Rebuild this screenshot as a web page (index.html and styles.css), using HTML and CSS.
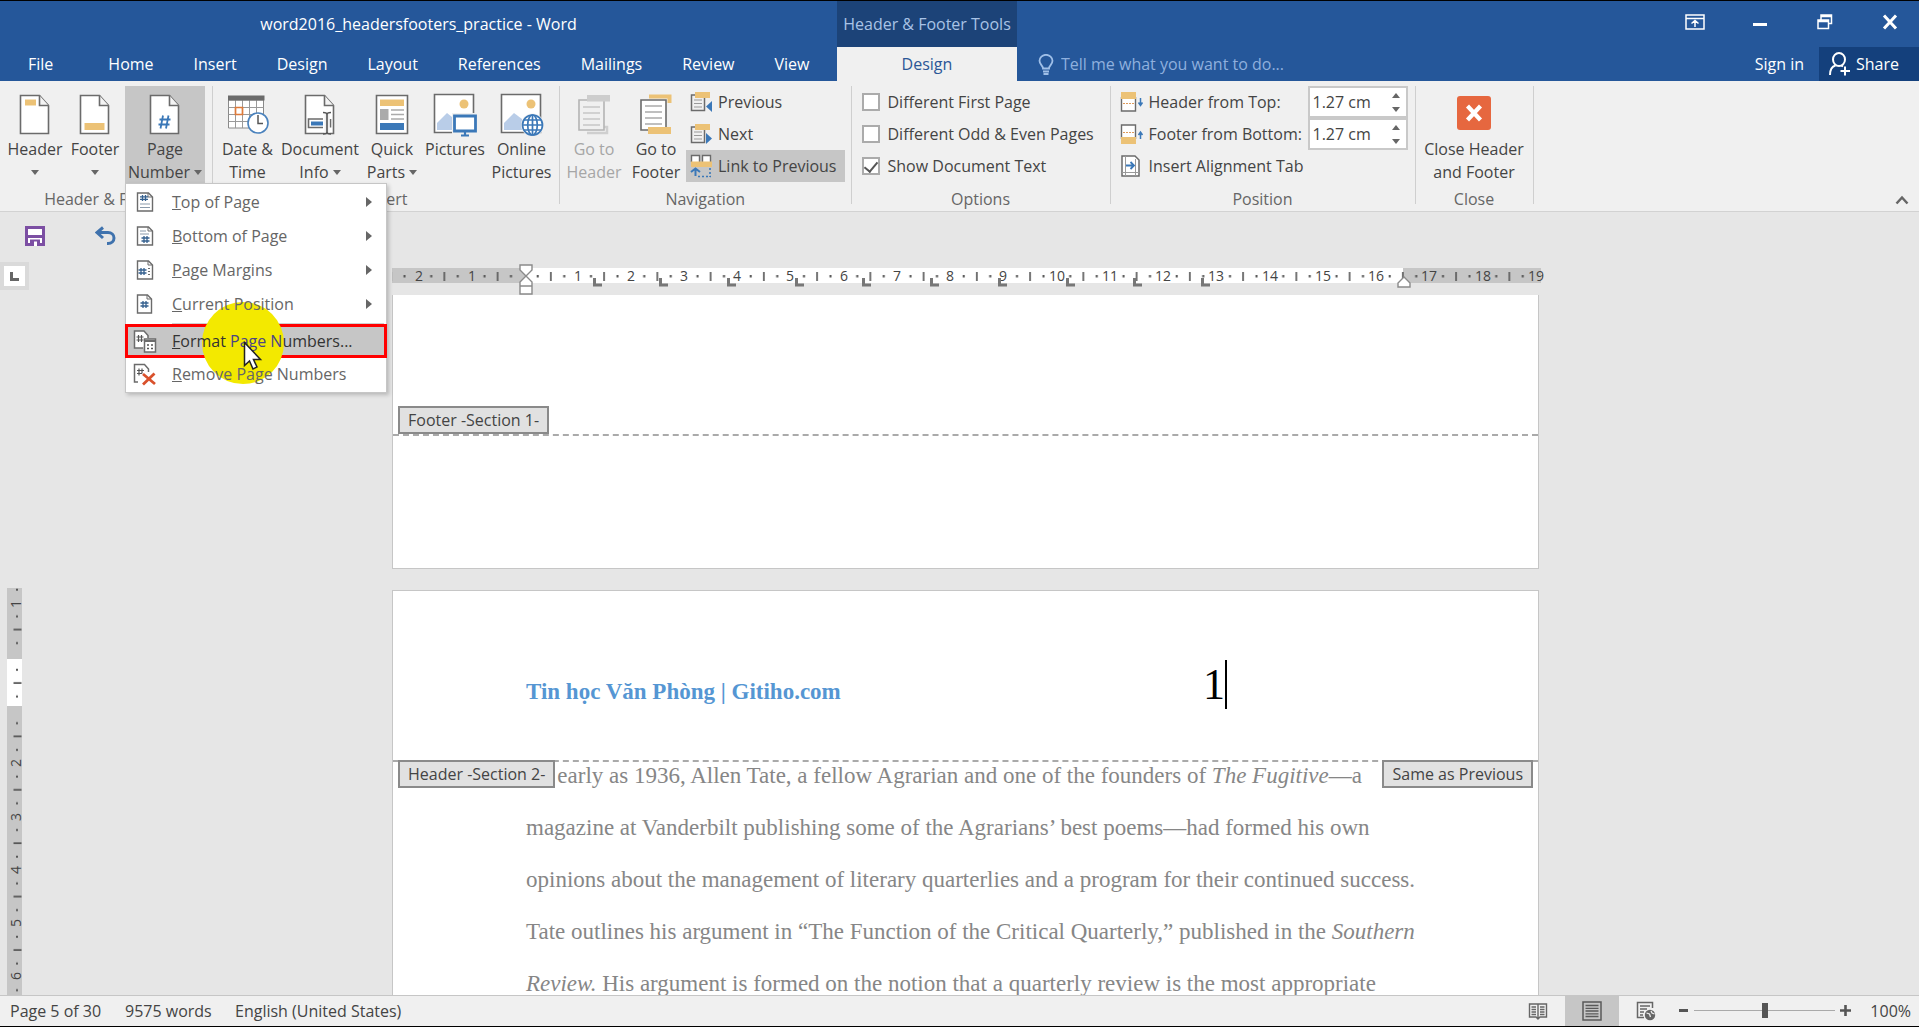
FILE: index.html
```
<!DOCTYPE html>
<html lang="en">
<head>
  <meta charset="UTF-8">
  <meta name="viewport" content="width=device-width, initial-scale=1.0">
  <title>word2016_headersfooters_practice - Word</title>
  <link rel="stylesheet" href="styles.css">
</head>
<body>
  <!-- Title bar and tabs -->
  <header class="topbar">
    <div class="topbar-main">
      <h1 class="doc-title">word2016_headersfooters_practice - Word</h1>
      <nav class="tabs">
        <button class="tab tab-file">File</button>
        <button class="tab">Home</button>
        <button class="tab">Insert</button>
        <button class="tab">Design</button>
        <button class="tab">Layout</button>
        <button class="tab">References</button>
        <button class="tab">Mailings</button>
        <button class="tab">Review</button>
        <button class="tab">View</button>
      </nav>
    </div>
    <div class="context">
      <div class="context-title">Header &amp; Footer Tools</div>
      <button class="context-tab">Design</button>
    </div>
    <div class="topbar-side">
      <div class="window-buttons">
        <button class="win" aria-label="Ribbon display options">
          <svg width="20" height="16" viewBox="0 0 20 16" fill="none" stroke="#fff" stroke-width="1.5"><path d="M1 1h18v14H1zM1 4.500h18M10 13V6.500M6.500 9.500 10 6.500l3.500 3"/></svg>
        </button>
        <button class="win" aria-label="Minimize">
          <svg width="20" height="16" viewBox="0 0 20 16"><path d="M3 9h14v3H3z" fill="#fff"/></svg>
        </button>
        <button class="win" aria-label="Restore">
          <svg width="20" height="16" viewBox="0 0 20 16" fill="none" stroke="#fff" stroke-width="1.500"><path d="M3 6h10.500v8.500H3zM3 7.500h10.500M6 5.500V1h10.500v8.500H14M6 2.500h10.500"/></svg>
        </button>
        <button class="win" aria-label="Close">
          <svg width="20" height="16" viewBox="0 0 20 16" fill="none" stroke="#fff" stroke-width="3"><path d="M4 1.500l12 13M16 1.500l-12 13"/></svg>
        </button>
      </div>
      <div class="account">
        <label class="tellme">
          <svg width="16" height="21" viewBox="0 0 16 21" fill="none" stroke="#9fbfe8" stroke-width="1.800"><path d="M5 14.500C5 11.500 1.500 10.500 1.500 6.800a6.300 5.800 0 0 1 13 0C14.500 10.500 11 11.500 11 14.500z"/><path d="M5 17.500h6M5.500 20h5"/></svg>
          <input type="text" placeholder="Tell me what you want to do..." aria-label="Tell me what you want to do">
        </label>
        <button class="signin">Sign in</button>
        <button class="share">
          <svg width="21" height="24" viewBox="0 0 21 24" fill="none" stroke="#fff" stroke-width="2"><ellipse cx="10" cy="7.500" rx="6" ry="6.500"/><path d="M1 23c0-5 2-8.500 5.500-9.500M12.500 13.500l1.500 1M16 14.500v9M11.500 19H21"/></svg>
          Share
        </button>
      </div>
    </div>
  </header>

  <!-- Ribbon -->
  <section class="ribbon">
    <div class="group">
      <div class="group-body group-hf">
        <button class="big big-header">
          <svg width="32" height="42" viewBox="0 0 32 42"><path d="M1.500 1.500h19l9 10v28h-28z" fill="#fff" stroke="#6b6b6b" stroke-width="1.600"/><path d="M20.500 1.500v10h9" fill="#f4f4f4" stroke="#6b6b6b" stroke-width="1.600"/><path d="M6 5.500h11v6H6z" fill="#ecc276"/></svg>
          <span>Header</span><span class="caret"></span>
        </button>
        <button class="big big-footer">
          <svg width="32" height="42" viewBox="0 0 32 42"><path d="M1.500 1.500h19l9 10v28h-28z" fill="#fff" stroke="#6b6b6b" stroke-width="1.600"/><path d="M20.500 1.500v10h9" fill="#f4f4f4" stroke="#6b6b6b" stroke-width="1.600"/><path d="M5.500 29h20v7h-20z" fill="#ecc276"/></svg>
          <span>Footer</span><span class="caret"></span>
        </button>
        <div class="menu-anchor">
          <button class="big big-number pressed">
            <svg width="32" height="42" viewBox="0 0 32 42"><path d="M1.500 1.500h19l9 10v28h-28z" fill="#fff" stroke="#6b6b6b" stroke-width="1.600"/><path d="M20.500 1.500v10h9" fill="#f4f4f4" stroke="#6b6b6b" stroke-width="1.600"/><path d="M14 21.500l-2.500 13M19.500 21.500l-2.500 13M10.500 25.500h11M9.500 30.500h11" stroke="#3b78b8" stroke-width="1.800"/></svg>
            <span>Page</span><span>Number<i class="caret"></i></span>
          </button>
          <!-- Page Number menu -->
          <div class="menu" role="menu">
            <i class="halo"></i>
            <button class="item">
              <svg width="24" height="20" viewBox="0 0 24 20"><path d="M4.500 1h11l4 4v14h-15z" fill="#fff" stroke="#6b6b6b" stroke-width="1.400"/><path d="M15 1v4h4" fill="none" stroke="#6b6b6b"/><path d="M9.500 3v6M12.500 3v6M7 4.800h8M7 7.400h8" stroke="#34608f" stroke-width="1.300"/><path d="M7 12h10M7 15.500h10" stroke="#8a9aab"/></svg>
              <span class="text"><u>T</u>op of Page</span><i class="arrow"></i>
            </button>
            <button class="item">
              <svg width="24" height="20" viewBox="0 0 24 20"><path d="M4.500 1h11l4 4v14h-15z" fill="#fff" stroke="#6b6b6b" stroke-width="1.400"/><path d="M15 1v4h4" fill="none" stroke="#6b6b6b"/><path d="M11 10v7M14 10v7M8.500 12h8M8.500 15h8" stroke="#34608f" stroke-width="1.300"/><path d="M7 5h6M7 8h9" stroke="#8a9aab"/></svg>
              <span class="text"><u>B</u>ottom of Page</span><i class="arrow"></i>
            </button>
            <button class="item">
              <svg width="24" height="20" viewBox="0 0 24 20"><path d="M4.500 1h11l4 4v14h-15z" fill="#fff" stroke="#6b6b6b" stroke-width="1.400"/><path d="M15 1v4h4" fill="none" stroke="#6b6b6b"/><path d="M8 8v7M11 8v7M5.500 10h8M5.500 13h8" stroke="#34608f" stroke-width="1.300"/><path d="M15 8.500h2M15 11.500h2M15 14.500h2" stroke="#6b6b6b"/></svg>
              <span class="text"><u>P</u>age Margins</span><i class="arrow"></i>
            </button>
            <button class="item">
              <svg width="24" height="20" viewBox="0 0 24 20"><path d="M4.500 1h10l4 4v14h-14z" fill="#fff" stroke="#6b6b6b" stroke-width="1.400"/><path d="M14 1v4h4" fill="none" stroke="#6b6b6b"/><path d="M10 7v7M13 7v7M7.500 9h8M7.500 12h8" stroke="#34608f" stroke-width="1.300"/></svg>
              <span class="text"><u>C</u>urrent Position</span><i class="arrow"></i>
            </button>
            <hr>
            <button class="item item-active">
              <svg width="24" height="24" viewBox="0 0 24 24"><path d="M10 19H1.500V2H11l4 4.500V9" fill="#fff" stroke="#6b6b6b" stroke-width="1.500"/><path d="M5.500 6v7M8.500 6v7M3.500 8h7M3.500 11h7" stroke="#555" stroke-width="1.200"/><path d="M11.500 10h11v13h-11z" fill="#fff" stroke="#6b6b6b" stroke-width="1.500"/><path d="M11.500 12h11" stroke="#6b6b6b" stroke-width="2"/><path d="M14 16h2M18 16h2M14 19.500h2M18 19.500h2" stroke="#555" stroke-width="1.600"/></svg>
              <span class="text"><u>F</u>ormat <span class="lit">Page N</span>umbers...</span>
            </button>
            <button class="item">
              <svg width="24" height="24" viewBox="0 0 24 24"><path d="M5 20H1.500V2.500h10l4 4.500V10" fill="#fff" stroke="#6b6b6b" stroke-width="1.500"/><path d="M6 6.500v7M9 6.500v5M4 8.500h7M4 11.500h5" stroke="#555" stroke-width="1.200"/><path d="M10 12l12 10M21.500 11.500 10 22.500" stroke="#d9512c" stroke-width="2.800"/></svg>
              <span class="text"><u>R</u>emove Page Numbers</span>
            </button>
            <svg class="pointer" width="20" height="30" viewBox="0 0 20 30"><path d="M1.500 1.500v23l5-4.500 3.500 8 4-2-3.500-7.500h7z" fill="#fff" stroke="#222" stroke-width="1.500"/></svg>
          </div>
        </div>
      </div>
      <div class="group-name">Header &amp; Footer</div>
    </div>

    <div class="group">
      <div class="group-body">
        <button class="big big-date">
          <svg width="42" height="42" viewBox="0 0 42 42"><path d="M1.500 6h35v28h-35z" fill="#fff" stroke="#8a8a8a"/><path d="M1.500 13.500h35M1.500 20.500h35M1.500 27.500h35M8.500 6v28M15.500 6v28M22.500 6v28M29.500 6v28" stroke="#9a9a9a"/><path d="M1 1.500h36.500v5H1z" fill="#6b6b6b"/><path d="M8.500 13.500h7v7h-7z" fill="#fff" stroke="#dd7a3a" stroke-width="1.700"/><circle cx="31" cy="29" r="10" fill="#fff" stroke="#4a82bd" stroke-width="1.600"/><path d="M31 21v8.500h5" fill="none" stroke="#555" stroke-width="1.500"/></svg>
          <span>Date &amp;</span><span>Time</span>
        </button>
        <button class="big big-doc">
          <svg width="32" height="42" viewBox="0 0 32 42"><path d="M1.500 1.500h19l9 10v28h-28z" fill="#fff" stroke="#6b6b6b" stroke-width="1.600"/><path d="M20.500 1.500v10h9" fill="#f4f4f4" stroke="#6b6b6b" stroke-width="1.600"/><path d="M19 25H4.500v8.500H19M26.500 25v8.500" fill="none" stroke="#6b6b6b" stroke-width="1.600"/><path d="M7 27.500h12v4H7z" fill="#3b78b8"/><path d="M23 19.500V39" stroke="#f0f0f0" stroke-width="5"/><path d="M19 18.500c2.500 0 4 .5 4 2 0-1.500 1.500-2 4-2M19 40c2.500 0 4-.5 4-2 0 1.500 1.500 2 4 2M23 20v18.500" fill="none" stroke="#555" stroke-width="1.600"/></svg>
          <span>Document</span><span>Info<i class="caret"></i></span>
        </button>
        <button class="big big-quick">
          <svg width="34" height="42" viewBox="0 0 34 42"><path d="M1.500 1.500h31v38h-31z" fill="#fff" stroke="#6b6b6b" stroke-width="1.600"/><path d="M5 5.500h24v6.500H5z" fill="#ecc276"/><path d="M5 15h8.500v11H5z" fill="#ababab"/><path d="M16 16h13M16 20.500h13M16 25h13" stroke="#ababab" stroke-width="1.400"/><path d="M5 29h24v7H5z" fill="#3b78b8"/></svg>
          <span>Quick</span><span>Parts<i class="caret"></i></span>
        </button>
        <button class="big big-pic">
          <svg width="44" height="44" viewBox="0 0 44 44"><path d="M1.500 1.500h39v38h-39z" fill="#fff" stroke="#6b6b6b" stroke-width="1.600"/><circle cx="31" cy="11" r="4.500" fill="#ecc276"/><path d="M4 37V30L14 20l5 4v13z" fill="#b9cde8"/><path d="M19 20h25v24H19z" fill="#f0f0f0"/><path d="M21.500 23h21v15h-21z" fill="#fff" stroke="#3b78b8" stroke-width="2.800"/><path d="M32 38v4M28 42.500h8" stroke="#3b78b8" stroke-width="2.200"/></svg>
          <span>Pictures</span><span></span>
        </button>
        <button class="big big-online">
          <svg width="44" height="44" viewBox="0 0 44 44"><path d="M1.500 1.500h39v38h-39z" fill="#fff" stroke="#6b6b6b" stroke-width="1.600"/><circle cx="31" cy="11" r="4.500" fill="#ecc276"/><path d="M4 37V30L14 20l8 6v11z" fill="#b9cde8"/><circle cx="32.500" cy="32" r="11.500" fill="#f0f0f0"/><g fill="#fff" stroke="#3b78b8" stroke-width="1.700"><circle cx="32.500" cy="32" r="10"/><ellipse cx="32.500" cy="32" rx="4.800" ry="10"/><path d="M22.500 32h20M24 27h17M24 37h17M32.500 22v20" fill="none"/></g></svg>
          <span>Online</span><span>Pictures</span>
        </button>
      </div>
      <div class="group-name">Insert</div>
    </div>

    <div class="group">
      <div class="group-body">
        <button class="big big-goheader" disabled>
          <svg width="34" height="42" viewBox="0 0 34 42"><path d="M26 33h4v6H10" fill="none" stroke="#cfcfcf" stroke-width="2.500"/><path d="M2 6h25v30H2z" fill="#f0f0f0" stroke="#b4b4b4" stroke-width="1.600"/><path d="M6 13h17M6 19h17M6 25h17M6 31h17" stroke="#c6c6c6" stroke-width="1.500"/><path d="M10 1h23v6.500H10z" fill="#cdcdcd"/></svg>
          <span>Go to</span><span>Header</span>
        </button>
        <button class="big big-gofooter">
          <svg width="34" height="42" viewBox="0 0 34 42"><path d="M10 2.500h20.500V9" fill="none" stroke="#ecc276" stroke-width="4"/><path d="M2 6h25v30H2z" fill="#fff" stroke="#6b6b6b" stroke-width="1.600"/><path d="M6 12h17M6 18h17M6 24h17M6 30h17" stroke="#ababab" stroke-width="1.500"/><path d="M9 33h23v7H9z" fill="#ecc276"/></svg>
          <span>Go to</span><span>Footer</span>
        </button>
        <div class="stack stack-nav">
          <button class="small">
            <svg width="23" height="22" viewBox="0 0 23 22"><path d="M14.500 7v12.500H1.500V4H5" fill="none" stroke="#6b6b6b" stroke-width="1.500"/><path d="M4 9h8M4 12.500h8M4 16h8" stroke="#9a9a9a"/><path d="M5 1h15v6H5z" fill="#ecc276"/><path d="M22 10v11l-6-5.500z" fill="#3b78b8"/></svg>
            Previous
          </button>
          <button class="small">
            <svg width="23" height="22" viewBox="0 0 23 22"><path d="M14.500 7v12.500H1.500V4H5" fill="none" stroke="#6b6b6b" stroke-width="1.500"/><path d="M4 9h8M4 12.500h8M4 16h8" stroke="#9a9a9a"/><path d="M5 1h15v6H5z" fill="#ecc276"/><path d="M16 10v11l6-5.500z" fill="#3b78b8"/></svg>
            Next
          </button>
          <button class="small pressed">
            <svg width="23" height="24" viewBox="0 0 23 24"><path d="M1.500 8V1.500h8V8M12.500 8V1.500h8V8" fill="#fff" stroke="#6b6b6b" stroke-width="1.400"/><path d="M1 7.500h21V13H1z" fill="#ecc276"/><path d="M1 18l4.500-3.500L10 18M5.500 15v7" fill="none" stroke="#3b78b8" stroke-width="2"/><path d="M8 22.500h13M20 14v9" stroke="#3b78b8" stroke-width="1.600" stroke-dasharray="2 2"/></svg>
            Link to Previous
          </button>
        </div>
      </div>
      <div class="group-name">Navigation</div>
    </div>

    <div class="group">
      <div class="group-body">
        <div class="stack stack-options">
          <label class="check"><input type="checkbox">Different First Page</label>
          <label class="check"><input type="checkbox">Different Odd &amp; Even Pages</label>
          <label class="check"><input type="checkbox" checked>Show Document Text</label>
        </div>
      </div>
      <div class="group-name">Options</div>
    </div>

    <div class="group">
      <div class="group-body">
        <div class="stack stack-position">
          <div class="field">
            <svg width="24" height="22" viewBox="0 0 24 22"><path d="M1.500 6v14h14V6" fill="#fff" stroke="#6b6b6b" stroke-width="1.400"/><path d="M1 1h15v7H1z" fill="#ecc276"/><path d="M3 12.500h12" stroke="#dd9a5a" stroke-dasharray="2 1"/><path d="M20.500 7v7M18.500 11.500l2 3 2-3" fill="none" stroke="#3b78b8" stroke-width="1.500"/></svg>
            <label for="headerTop">Header from Top:</label>
            <span class="spin">
              <input type="text" id="headerTop" value="1.27 cm">
              <span class="spin-buttons"><button class="up" aria-label="Increase"></button><button class="down" aria-label="Decrease"></button></span>
            </span>
          </div>
          <div class="field">
            <svg width="24" height="22" viewBox="0 0 24 22"><path d="M1.500 16V2h14v14" fill="#fff" stroke="#6b6b6b" stroke-width="1.400"/><path d="M1 14h15v7H1z" fill="#ecc276"/><path d="M3 9.500h12" stroke="#dd9a5a" stroke-dasharray="2 1"/><path d="M20.500 16V9M18.500 12l2-3 2 3" fill="none" stroke="#3b78b8" stroke-width="1.500"/></svg>
            <label for="footerBottom">Footer from Bottom:</label>
            <span class="spin">
              <input type="text" id="footerBottom" value="1.27 cm">
              <span class="spin-buttons"><button class="up" aria-label="Increase"></button><button class="down" aria-label="Decrease"></button></span>
            </span>
          </div>
          <button class="small">
            <svg width="24" height="22" viewBox="0 0 24 22"><path d="M2 1h13l4 4v16H2z" fill="#fff" stroke="#6b6b6b" stroke-width="1.500"/><path d="M5.500 1v20M15.500 4v17M2 17.500h17" stroke="#9a9a9a"/><path d="M6 10.500h8M10.500 7l3.500 3.500-3.500 3.500" fill="none" stroke="#3b78b8" stroke-width="1.800"/></svg>
            Insert Alignment Tab
          </button>
        </div>
      </div>
      <div class="group-name">Position</div>
    </div>

    <div class="group">
      <div class="group-body">
        <button class="big big-close">
          <svg width="36" height="42" viewBox="0 0 36 42"><rect x="1" y="2" width="34" height="34" rx="3" fill="#e6673f"/><path d="M11.500 12l13 14M24.500 12l-13 14" stroke="#fff" stroke-width="4.200"/></svg>
          <span>Close Header</span><span>and Footer</span>
        </button>
      </div>
      <div class="group-name">Close</div>
    </div>

    <button class="collapse" aria-label="Collapse the ribbon">
      <svg width="14" height="10" viewBox="0 0 14 10"><path d="M1.500 8.500 7 2.500l5.500 6" fill="none" stroke="#666" stroke-width="2.500"/></svg>
    </button>
  </section>

  <!-- Quick access bar -->
  <div class="quick">
    <button aria-label="Save">
      <svg width="20" height="20" viewBox="0 0 20 20"><path d="M1.500 1.500h17v17h-17z" fill="#fff" stroke="#7c4fa3" stroke-width="3"/><path d="M3 10.500h14" stroke="#7c4fa3" stroke-width="3"/><path d="M5 13.500h10V20H5z" fill="#7c4fa3"/><path d="M9 15.500h3V20H9z" fill="#fff"/></svg>
    </button>
    <button aria-label="Undo">
      <svg width="21" height="20" viewBox="0 0 21 20" fill="none" stroke="#3f72ad" stroke-width="3"><path d="M8 1.500 2 6.500l6 5.500M2.500 6.500H13c3.500 0 6 2.300 6 5.500s-2.500 5.500-6 5.500h-1"/></svg>
    </button>
  </div>

  <!-- Document area -->
  <main class="workspace">
    <aside class="gutter">
      <button class="tab-kind" aria-label="Left tab">
        <svg width="9" height="9" viewBox="0 0 9 9"><path d="M1.500 0v7.500H9" fill="none" stroke="#666" stroke-width="3"/></svg>
      </button>
      <svg class="ruler-v" width="15" height="500" viewBox="0 0 15 500">
        <defs>
          <pattern id="ticksV" y="68.200" width="15" height="53.400" patternUnits="userSpaceOnUse"><path d="M9 12.500h2v2H9zM9 39.300h2v2H9zM6.500 26h8v1.600h-8z" fill="#555"/></pattern>
        </defs>
        <path d="M0 0h15v500H0z" fill="#c6c6c6"/>
        <path d="M0 71h15v47H0z" fill="#fff"/>
        <path d="M0 0h15v500H0z" fill="url(#ticksV)"/>
        <g class="ruler-text">
          <text transform="translate(14 16) rotate(-90)">1</text>
          <text transform="translate(14 175) rotate(-90)">2</text>
          <text transform="translate(14 229) rotate(-90)">3</text>
          <text transform="translate(14 282) rotate(-90)">4</text>
          <text transform="translate(14 335) rotate(-90)">5</text>
          <text transform="translate(14 388) rotate(-90)">6</text>
        </g>
      </svg>
    </aside>

    <div class="canvas">
      <svg class="ruler-h" width="1147" height="33" viewBox="0 0 1147 33">
        <defs>
          <pattern id="ticksH" x="132.250" width="53.250" height="33" patternUnits="userSpaceOnUse"><path d="M12.500 13h2v2.500h-2zM39 13h2v2.500h-2zM25.800 10h1.600v9h-1.600z" fill="#555"/></pattern>
          <path id="stop" d="M-2.500-8v7H5" fill="none" stroke="#777" stroke-width="3"/>
        </defs>
        <path d="M0 6h1149v15H0z" fill="#c6c6c6"/>
        <path d="M134 6h877v15H134z" fill="#fff"/>
        <path d="M0 6h1138v15H0z" fill="url(#ticksH)"/>
        <g class="ruler-text">
          <text x="27" y="19">2</text><text x="80" y="19">1</text>
          <text x="186" y="19">1</text><text x="239" y="19">2</text><text x="292" y="19">3</text>
          <text x="345" y="19">4</text><text x="398" y="19">5</text><text x="452" y="19">6</text>
          <text x="505" y="19">7</text><text x="558" y="19">8</text><text x="611" y="19">9</text>
          <text x="665" y="19">10</text><text x="718" y="19">11</text><text x="771" y="19">12</text>
          <text x="824" y="19">13</text><text x="878" y="19">14</text><text x="931" y="19">15</text>
          <text x="984" y="19">16</text><text x="1037" y="19">17</text><text x="1091" y="19">18</text>
          <text x="1144" y="19">19</text>
        </g>
        <use href="#stop" x="205" y="24"/><use href="#stop" x="271" y="24"/><use href="#stop" x="339" y="24"/>
        <use href="#stop" x="407" y="24"/><use href="#stop" x="474" y="24"/><use href="#stop" x="542" y="24"/>
        <use href="#stop" x="610" y="24"/><use href="#stop" x="678" y="24"/><use href="#stop" x="745" y="24"/>
        <use href="#stop" x="813" y="24"/>
        <g fill="#fff" stroke="#8a8a8a" stroke-width="1.400">
          <path d="M128 3h12v5l-6 6-6-6zM134 14l6 6v4h-12v-4zM128 24h12v8h-12z"/>
          <path d="M1012 15l6 6v4h-12v-4z"/>
        </g>
      </svg>

      <article class="page page-first">
        <div class="footer-line"><span class="tag">Footer -Section 1-</span></div>
      </article>

      <article class="page page-second">
        <div class="header-line">
          <div class="header-text">
            <strong>Tin học Văn Phòng | Gitiho.com</strong>
            <span class="page-number">1</span>
          </div>
          <span class="tag tag-left">Header -Section 2-</span>
          <span class="tag tag-right">Same as Previous</span>
        </div>
        <p class="copy">
          As early as 1936, Allen Tate, a fellow Agrarian and one of the founders of <em>The Fugitive</em>—a<br>
          magazine at Vanderbilt publishing some of the Agrarians’ best poems—had formed his own<br>
          opinions about the management of literary quarterlies and a program for their continued success.<br>
          Tate outlines his argument in “The Function of the Critical Quarterly,” published in the <em>Southern</em><br>
          <em>Review.</em> His argument is formed on the notion that a quarterly review is the most appropriate
        </p>
      </article>
    </div>
  </main>

  <!-- Status bar -->
  <footer class="status">
    <span class="status-page">Page 5 of 30</span>
    <span class="status-words">9575 words</span>
    <span>English (United States)</span>
    <div class="status-right">
      <button class="view" aria-label="Read mode">
        <svg width="20" height="20" viewBox="0 0 20 20" fill="none" stroke="#666" stroke-width="1.400"><path d="M10 3H1.500v13H8l2 2 2-2h6.500V3zM10 3v16"/><path d="M3.500 6H8M3.500 8.500H8M3.500 11H8M3.500 13.500H8M12 6h4.500M12 8.500h4.500M12 11h4.500M12 13.500h4.500"/></svg>
      </button>
      <button class="view pressed" aria-label="Print layout">
        <svg width="20" height="20" viewBox="0 0 20 20" fill="none" stroke="#5a5a5a" stroke-width="1.500"><path d="M1 1h18v18H1z"/><path d="M3.500 4.500h13M3.500 7.300h13M3.500 10h13M3.500 12.800h13M3.500 15.500h13" stroke-width="1.300"/></svg>
      </button>
      <button class="view" aria-label="Web layout">
        <svg width="20" height="20" viewBox="0 0 20 20" fill="none" stroke="#666" stroke-width="1.500"><path d="M8 16.500H1.500v-15h15V7M4 5h10M4 8h7M4 11h4M4 14h3"/><circle cx="14" cy="14" r="5.200" fill="#666" stroke="none"/><path d="M10.500 12l3 1 1 3M15 10l1 2 2.500 1" stroke="#f0f0f0" stroke-width="1.300"/></svg>
      </button>
      <button class="zoom-step" aria-label="Zoom out"><svg width="11" height="11" viewBox="0 0 11 11"><path d="M1 5.500h9" stroke="#555" stroke-width="3"/></svg></button>
      <input class="zoom" type="range" min="0" max="200" value="100" aria-label="Zoom">
      <button class="zoom-step" aria-label="Zoom in"><svg width="11" height="11" viewBox="0 0 11 11"><path d="M0 5.500h11M5.500 0v11" stroke="#555" stroke-width="2.600"/></svg></button>
      <span class="zoom-value">100%</span>
    </div>
  </footer>
</body>
</html>
```
FILE: styles.css
```
* {
  box-sizing: border-box;
  margin: 0;
  padding: 0;
}
body {
  display: flex;
  flex-direction: column;
  height: 100vh;
  overflow: hidden;
  border-top: 1px solid #000;
  border-bottom: 1px solid #000;
  background: #e6e6e6;
  color: #444;
  font-family: "Open Sans", "Noto Sans", sans-serif;
  font-size: 16px;
}
button, input {
  border: none;
  background: none;
  color: inherit;
  font: inherit;
}
button {
  white-space: nowrap;
}
svg {
  display: block;
  flex: none;
}

/* Title bar */
.topbar {
  display: flex;
  flex: none;
  height: 80px;
  background: #25579a;
  color: #fff;
}
.topbar-main {
  flex: none;
  width: 837px;
}
.doc-title {
  height: 46px;
  line-height: 46px;
  font-size: 16px;
  font-weight: normal;
  text-align: center;
}
.tabs {
  display: flex;
}
.tab {
  height: 34px;
  padding: 0 20px;
}
.tab-file {
  padding: 0 35px 0 28px;
}
.context {
  flex: none;
  width: 180px;
  background: #1c4378;
  text-align: center;
}
.context-title {
  height: 46px;
  line-height: 46px;
  color: #a9c3e6;
}
.context-tab {
  width: 100%;
  height: 34px;
  background: #f0f0f0;
  color: #2b5797;
}
.topbar-side {
  display: flex;
  flex: 1;
  flex-direction: column;
}
.window-buttons {
  display: flex;
  justify-content: flex-end;
  align-items: center;
  gap: 45px;
  height: 46px;
  padding: 0 19px 4px 0;
}
.account {
  display: flex;
  height: 34px;
}
.tellme {
  display: flex;
  flex: 1;
  align-items: center;
  gap: 7px;
  padding-left: 21px;
}
.tellme input {
  width: 300px;
}
.tellme input::placeholder {
  color: #8fb0de;
}
.signin {
  padding: 0 15px;
}
.share {
  display: flex;
  align-items: center;
  gap: 6px;
  width: 100px;
  padding-left: 10px;
  background: #14407c;
}

/* Ribbon */
.ribbon {
  position: relative;
  z-index: 2;
  display: flex;
  flex: none;
  height: 131px;
  padding-top: 5px;
  border-bottom: 1px solid #d2d2d2;
  background: #f0f0f0;
}
.group {
  height: 118px;
  border-right: 1px solid #cfcfcf;
}
.group-body {
  display: flex;
  height: 97px;
  padding: 0 1px;
}
.group-hf {
  padding: 0 7px 0 5px;
}
.group-name {
  height: 21px;
  line-height: 33px;
  color: #666;
  text-align: center;
}
.big {
  display: flex;
  flex-direction: column;
  align-items: center;
  padding-top: 6px;
  line-height: 23px;
}
.big svg {
  height: 46px;
}
.big span {
  display: flex;
  align-items: center;
  gap: 4px;
  height: 23px;
}
.big:disabled {
  color: #a6a6a6;
}
.pressed {
  background: #c6c6c6;
}
.caret::before {
  content: "";
  display: block;
  border: 4px solid transparent;
  border-top: 5px solid #666;
  border-bottom: none;
}
.big-header { width: 60px; }
.big-footer { width: 60px; }
.big-number { width: 80px; height: 97px; }
.big-date { width: 67px; }
.big-doc { width: 78px; }
.big-quick { width: 66px; }
.big-pic { width: 60px; }
.big-online { width: 73px; }
.big-goheader { width: 66px; }
.big-gofooter { width: 58px; }
.big-close { width: 115px; }

.stack {
  display: flex;
  flex-direction: column;
}
.stack-nav {
  margin: 0 5px 0 1px;
}
.stack-options {
  width: 256px;
  padding-left: 9px;
}
.stack-position {
  width: 302px;
  padding: 0 6px 0 8px;
}
.small, .check, .field {
  display: flex;
  align-items: center;
  height: 32px;
}
.small {
  gap: 5px;
  padding: 0 8px 0 4px;
}
.stack-position .small {
  padding-left: 0;
}
.check {
  gap: 8px;
  white-space: nowrap;
}
.check input {
  appearance: none;
  display: flex;
  justify-content: center;
  width: 18px;
  height: 18px;
  border: 2px solid #ababab;
  background: #fff;
}
.check input:checked::after {
  content: "";
  width: 6px;
  height: 11px;
  border: solid #555;
  border-width: 0 2px 2px 0;
  transform: rotate(40deg);
}
.field {
  gap: 5px;
}
.spin {
  display: flex;
  width: 100px;
  height: 32px;
  margin-left: auto;
  border: 2px solid #c9c9c9;
  background: #fff;
}
.spin input {
  flex: 1;
  width: 40px;
  padding-left: 3px;
}
.spin-buttons {
  display: flex;
  flex-direction: column;
  justify-content: center;
  gap: 9px;
  padding-right: 6px;
}
.up, .down {
  border: 4px solid transparent;
}
.up {
  border-top: none;
  border-bottom: 5px solid #666;
}
.down {
  border-top: 5px solid #666;
  border-bottom: none;
}
.collapse {
  align-self: flex-end;
  margin: 0 10px 6px auto;
}

/* Page Number menu */
.menu-anchor {
  position: relative;
}
.menu {
  position: absolute;
  top: 97px;
  left: 0;
  width: 262px;
  padding: 1px 0;
  border: 1px solid #c6c6c6;
  background: #fff;
  box-shadow: 2px 2px 4px rgba(0, 0, 0, 0.2);
  color: #666;
}
.item {
  display: flex;
  align-items: center;
  gap: 15px;
  width: 100%;
  height: 34px;
  padding: 0 14px 0 7px;
}
.item .text {
  position: relative;
  z-index: 2;
}
.item-active {
  height: 32px;
  outline: 3px solid #f00;
  outline-offset: -2px;
  background: #c6c6c6;
  color: #333;
}
.lit {
  color: #4b4585;
}
.arrow {
  margin-left: auto;
  border: 5px solid transparent;
  border-left: 6px solid #666;
  border-right: none;
}
.menu hr {
  height: 1px;
  margin: 2px 2px 1px 46px;
  border: none;
  background: #d0d0d0;
}
/* Click highlight with the mouse pointer over it */
.halo {
  position: absolute;
  top: 118px;
  left: 76px;
  z-index: 1;
  width: 82px;
  height: 82px;
  border-radius: 50%;
  background: #f3e900;
}
.pointer {
  position: absolute;
  top: 157px;
  left: 117px;
  z-index: 3;
}

/* Quick access bar */
.quick {
  display: flex;
  flex: none;
  align-items: center;
  gap: 50px;
  height: 50px;
  padding: 0 0 2px 25px;
}

/* Document area */
.workspace {
  display: flex;
  flex: 1;
  min-height: 0;
  overflow: hidden;
}
.gutter {
  flex: none;
  width: 29px;
}
.tab-kind {
  display: flex;
  align-items: center;
  justify-content: center;
  width: 29px;
  height: 28px;
  margin-bottom: 298px;
  border: 4px solid #dadada;
  background: #fff;
}
.ruler-v {
  margin-left: 7px;
  overflow: visible;
}
.ruler-text {
  fill: #444;
  font-size: 14px;
  text-anchor: middle;
}
.canvas {
  display: flex;
  flex: 1;
  flex-direction: column;
  align-items: center;
  padding-right: 17px;
}
.ruler-h {
  overflow: visible;
}
.page {
  flex: none;
  width: 1147px;
  border: 1px solid #c6c6c6;
  background: #fff;
}
.page-first {
  height: 274px;
  margin-bottom: 21px;
  padding-top: 111px;
  border-top: none;
}
.page-second {
  height: 1500px;
}
.footer-line {
  display: flex;
  padding-left: 5px;
  border-bottom: 2px dashed #aaa;
}
.tag {
  height: 28px;
  padding: 0 8px;
  border: 2px solid #8a8a8a;
  background: #e1e1e1;
  line-height: 24px;
}
.header-line {
  position: relative;
  height: 171px;
  padding: 69px 0 0 133px;
  border-bottom: 2px dashed #aaa;
}
.header-text {
  display: flex;
  align-items: baseline;
  font-family: "Liberation Serif", serif;
  font-size: 23px;
}
.header-text strong {
  width: 677px;
  color: #5596d3;
}
.page-number {
  border-right: 2px solid #000;
  color: #000;
  font-size: 44px;
  line-height: 49px;
}
.tag-left, .tag-right {
  position: absolute;
  top: 169px;
}
.tag-left {
  left: 5px;
}
.tag-right {
  right: 5px;
}
.copy {
  margin-top: -12px;
  padding-left: 133px;
  color: #868686;
  font-family: "Liberation Serif", serif;
  font-size: 23px;
  line-height: 52px;
  white-space: nowrap;
}

/* Status bar */
.status {
  display: flex;
  flex: none;
  align-items: center;
  height: 31px;
  padding: 0 0 1px 10px;
  border-top: 1px solid #c6c6c6;
  background: #f0f0f0;
}
.status-page {
  width: 115px;
}
.status-words {
  width: 110px;
}
.status-right {
  display: flex;
  align-items: center;
  height: 30px;
  margin-left: auto;
  padding-right: 8px;
}
.view {
  display: flex;
  align-items: center;
  justify-content: center;
  width: 54px;
  height: 30px;
}
.zoom-step {
  padding: 0 5px;
}
.zoom {
  appearance: none;
  width: 141px;
  height: 15px;
  background: linear-gradient(#aaa, #aaa) center / 100% 1px no-repeat;
}
.zoom::-webkit-slider-thumb {
  appearance: none;
  width: 6px;
  height: 15px;
  background: #555;
}
.zoom-value {
  width: 55px;
  text-align: right;
}
```
